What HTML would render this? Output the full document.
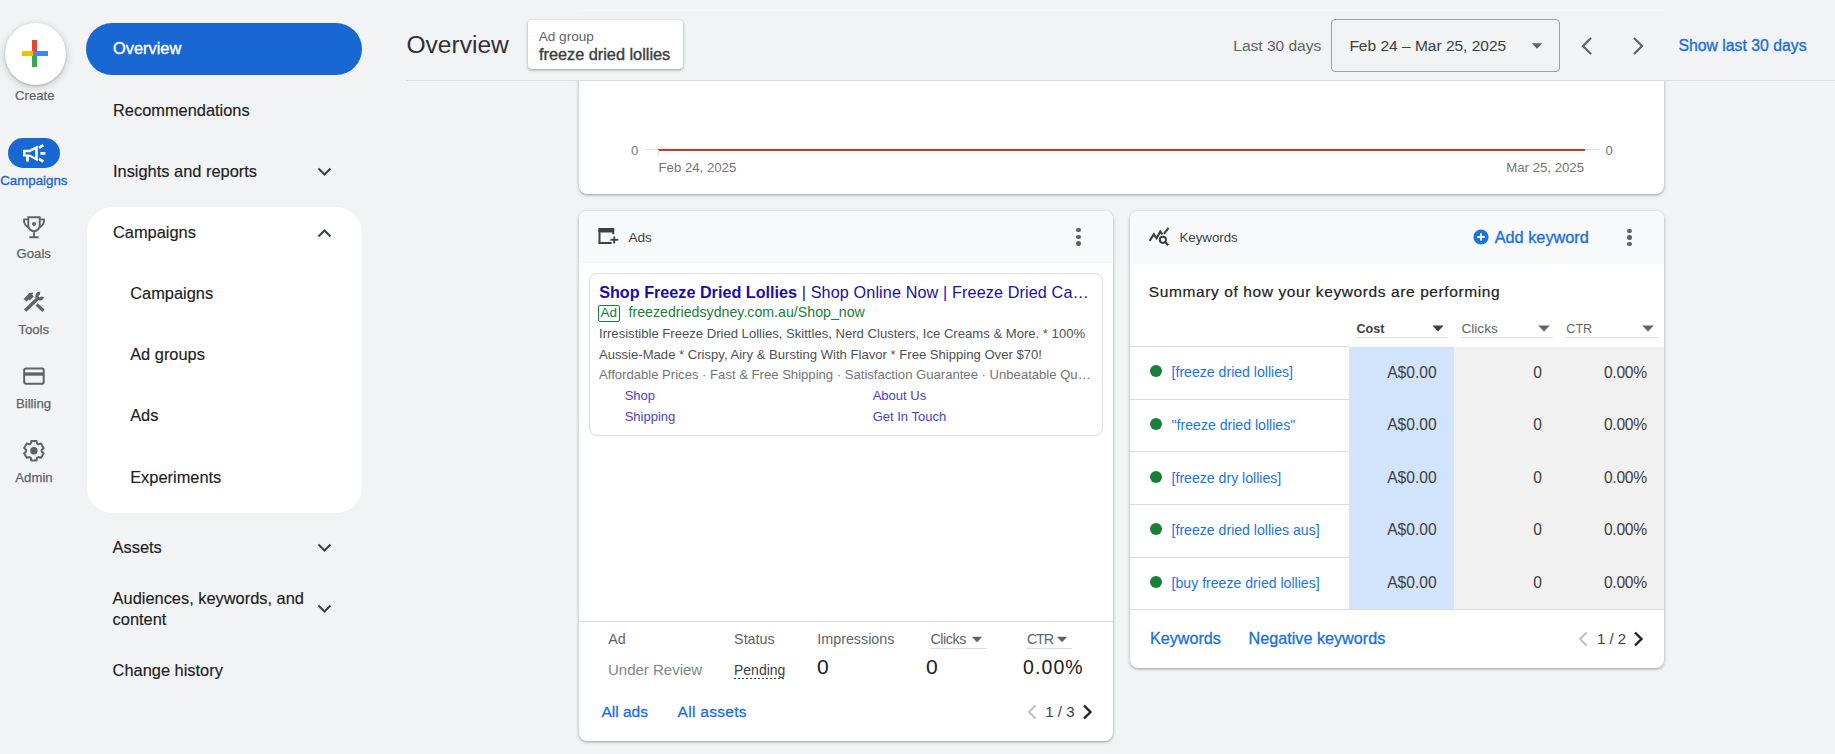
<!DOCTYPE html>
<html><head><meta charset="utf-8"><title>Overview</title>
<style>
html,body{margin:0;padding:0;width:1835px;height:754px;overflow:hidden;background:#f1f3f4;font-family:"Liberation Sans",sans-serif;position:relative}
.t{position:absolute;line-height:1;white-space:nowrap}
.r{position:absolute;display:block}
b{font-weight:700}
</style></head><body>
<div class="r" style="left:4.6px;top:23.3px;width:61.5px;height:61.5px;background:#fff;border-radius:50%;box-shadow:0 1px 2px rgba(60,64,67,.3),0 2px 6px 2px rgba(60,64,67,.15)"></div>
<div class="r" style="left:32.4px;top:40.4px;width:4.4px;height:13.2px;background:#ea4335"></div>
<div class="r" style="left:32.4px;top:53.6px;width:4.4px;height:13.0px;background:#34a853"></div>
<div class="r" style="left:21.5px;top:51.3px;width:11.4px;height:4.4px;background:#fbbc04"></div>
<div class="r" style="left:32.9px;top:51.3px;width:14.9px;height:4.4px;background:#4285f4"></div>
<div class="t" style="left:-65.2px;width:200px;text-align:center;top:89.2px;font-size:13.2px;color:#5f6368;font-weight:400;;-webkit-text-stroke:0.2px #5f6368">Create</div>
<div class="r" style="left:8.0px;top:138.4px;width:52.0px;height:29.6px;background:#1967d2;border-radius:15px"></div>
<svg class="r" style="left:18px;top:140px" width="32" height="28" viewBox="0 0 32 28"><path fill-rule="evenodd" d="M5 9.8H11L19.8 5.4V21.3L11 16.4H10.9V21.6H8V16.4H5Z M7.5 12.3H11.7L17.2 9.5V17.3L11.7 14.4H7.5Z" fill="#fff"/><path d="M21 7.9L25.3 5.1M22.4 13.4H27.4M21 18.9L25.3 21.7" stroke="#fff" stroke-width="2.8" stroke-linecap="butt"/></svg>
<div class="t" style="left:-66.2px;width:200px;text-align:center;top:173.5px;font-size:13.3px;color:#1967d2;font-weight:400;;-webkit-text-stroke:0.35px #1967d2">Campaigns</div>
<svg class="r" style="left:20px;top:212px" width="28" height="28" viewBox="0 0 28 28"><path d="M8.3 5.2H19.7V13.5A5.7 5.7 0 0 1 8.3 13.5Z M8.3 7.4H4.1V9.2Q4.1 12.8 8.7 15.6 M19.7 7.4H23.9V9.2Q23.9 12.8 19.3 15.6 M14 19.3V25.2 M9.3 25.3H18.6" fill="none" stroke="#5f6368" stroke-width="1.9"/><circle cx="14" cy="11.9" r="2" fill="#5f6368"/></svg>
<div class="t" style="left:-66.3px;width:200px;text-align:center;top:246.8px;font-size:13.2px;color:#5f6368;font-weight:400;;-webkit-text-stroke:0.25px #5f6368">Goals</div>
<svg class="r" style="left:20px;top:288px" width="28" height="28" viewBox="0 0 28 28"><path d="M5.2 22.4L17 11.2" stroke="#5f6368" stroke-width="3.4"/><path d="M20.05 5.4A2.75 2.75 0 1 0 22.4 8.7" fill="none" stroke="#5f6368" stroke-width="3.1"/><path d="M3.6 11L9.6 4.8H13.4L12.2 6.6L13.8 8.4L9.8 12.4L8.6 11.2L6.6 13.6Z" fill="#5f6368"/><path d="M16.6 16.4L23.4 22.8" stroke="#5f6368" stroke-width="3.3"/></svg>
<div class="t" style="left:-66.3px;width:200px;text-align:center;top:323.1px;font-size:13.2px;color:#5f6368;font-weight:400;;-webkit-text-stroke:0.25px #5f6368">Tools</div>
<svg class="r" style="left:20px;top:362px" width="28" height="28" viewBox="0 0 28 28"><rect x="4.2" y="6.4" width="19.5" height="15.3" rx="1.6" fill="none" stroke="#5f6368" stroke-width="2"/><rect x="4" y="10.4" width="20" height="3.3" fill="#5f6368"/></svg>
<div class="t" style="left:-66.5px;width:200px;text-align:center;top:396.8px;font-size:13.2px;color:#5f6368;font-weight:400;;-webkit-text-stroke:0.25px #5f6368">Billing</div>
<svg class="r" style="left:20px;top:436px" width="28" height="28" viewBox="0 0 28 28"><path d="M10.73 7.57 L11.29 4.94 L16.51 4.94 L17.07 7.57 L18.48 8.39 L21.04 7.56 L23.66 12.09 L21.66 13.88 L21.66 15.52 L23.66 17.31 L21.04 21.84 L18.48 21.01 L17.07 21.83 L16.51 24.46 L11.29 24.46 L10.73 21.83 L9.32 21.01 L6.76 21.84 L4.14 17.31 L6.14 15.52 L6.14 13.88 L4.14 12.09 L6.76 7.56 L9.32 8.39Z" fill="none" stroke="#5f6368" stroke-width="2" stroke-linejoin="round"/><circle cx="13.9" cy="14.7" r="3.7" fill="#5f6368"/></svg>
<div class="t" style="left:-66.0px;width:200px;text-align:center;top:470.8px;font-size:13.2px;color:#5f6368;font-weight:400;;-webkit-text-stroke:0.25px #5f6368">Admin</div>
<div class="r" style="left:86.3px;top:23.3px;width:275.4px;height:52.0px;background:#1967d2;border-radius:26px"></div>
<div class="t" style="left:113.0px;top:40.3px;font-size:16.4px;color:#fff;font-weight:400;;-webkit-text-stroke:0.35px #fff">Overview</div>
<div class="t" style="left:113.0px;top:101.8px;font-size:16.4px;color:#202124;font-weight:400;;-webkit-text-stroke:0.15px #202124">Recommendations</div>
<div class="t" style="left:113.0px;top:163.2px;font-size:16.4px;color:#202124;font-weight:400;;-webkit-text-stroke:0.15px #202124">Insights and reports</div>
<svg class="r" style="left:317.2px;top:166.8px" width="15" height="9" viewBox="0 0 15 9"><path d="M1.5 1.5L7.5 7.5L13.5 1.5" fill="none" stroke="#3c4043" stroke-width="2"/></svg>
<div class="r" style="left:86.5px;top:207.0px;width:275.0px;height:306.4px;background:#fff;border-radius:26px"></div>
<div class="t" style="left:113.0px;top:223.9px;font-size:16.4px;color:#202124;font-weight:400;;-webkit-text-stroke:0.15px #202124">Campaigns</div>
<svg class="r" style="left:317.2px;top:229.3px" width="15" height="9" viewBox="0 0 15 9"><path d="M1.5 7.5L7.5 1.5L13.5 7.5" fill="none" stroke="#3c4043" stroke-width="2"/></svg>
<div class="t" style="left:130.2px;top:285.0px;font-size:16.4px;color:#202124;font-weight:400;;-webkit-text-stroke:0.15px #202124">Campaigns</div>
<div class="t" style="left:130.2px;top:346.0px;font-size:16.4px;color:#202124;font-weight:400;;-webkit-text-stroke:0.15px #202124">Ad groups</div>
<div class="t" style="left:130.2px;top:407.3px;font-size:16.4px;color:#202124;font-weight:400;;-webkit-text-stroke:0.15px #202124">Ads</div>
<div class="t" style="left:130.2px;top:468.7px;font-size:16.4px;color:#202124;font-weight:400;;-webkit-text-stroke:0.15px #202124">Experiments</div>
<div class="t" style="left:112.6px;top:538.7px;font-size:16.4px;color:#202124;font-weight:400;;-webkit-text-stroke:0.15px #202124">Assets</div>
<svg class="r" style="left:317.2px;top:542.9px" width="15" height="9" viewBox="0 0 15 9"><path d="M1.5 1.5L7.5 7.5L13.5 1.5" fill="none" stroke="#3c4043" stroke-width="2"/></svg>
<div class="t" style="left:112.6px;top:589.6px;font-size:16.4px;color:#202124;font-weight:400;;-webkit-text-stroke:0.15px #202124">Audiences, keywords, and</div>
<div class="t" style="left:112.6px;top:611.4px;font-size:16.4px;color:#202124;font-weight:400;;-webkit-text-stroke:0.15px #202124">content</div>
<svg class="r" style="left:317.2px;top:604.1px" width="15" height="9" viewBox="0 0 15 9"><path d="M1.5 1.5L7.5 7.5L13.5 1.5" fill="none" stroke="#3c4043" stroke-width="2"/></svg>
<div class="t" style="left:112.6px;top:661.9px;font-size:16.4px;color:#202124;font-weight:400;;-webkit-text-stroke:0.15px #202124">Change history</div>
<div class="r" style="left:578.7px;top:-20.0px;width:1085.0px;height:213.8px;background:#fff;border-radius:8px;box-shadow:0 1px 2px 0 rgba(60,64,67,.3),0 1px 3px 1px rgba(60,64,67,.15);"></div>
<div class="t" style="left:631.0px;top:143.6px;font-size:13.2px;color:#757575;font-weight:400;">0</div>
<div class="r" style="left:644.6px;top:149.0px;width:13.4px;height:1.0px;background:#e0e0e0"></div>
<div class="r" style="left:658.0px;top:149.0px;width:927.0px;height:2.2px;background:#d93025"></div>
<div class="r" style="left:657.5px;top:150.0px;width:1.0px;height:6.0px;background:#e0e0e0"></div>
<div class="r" style="left:1585.0px;top:149.0px;width:15.0px;height:1.0px;background:#e0e0e0"></div>
<div class="t" style="left:1605.5px;top:143.6px;font-size:13.2px;color:#757575;font-weight:400;">0</div>
<div class="t" style="left:658.5px;top:161.3px;font-size:13.2px;color:#757575;font-weight:400;">Feb 24, 2025</div>
<div class="t" style="right:251.0px;top:161.3px;font-size:13.2px;color:#757575;font-weight:400;">Mar 25, 2025</div>
<div class="r" style="left:380.0px;top:0.0px;width:1455.0px;height:80.0px;background:#f1f3f4"></div>
<div class="r" style="left:578.0px;top:10.0px;width:1086.0px;height:1.0px;background:#f6f7f8"></div>
<div class="r" style="left:406.0px;top:80.0px;width:1429.0px;height:1.0px;background:#dadce0"></div>
<div class="t" style="left:406.4px;top:33.1px;font-size:24.6px;color:#303134;font-weight:400;">Overview</div>
<div class="r" style="left:528.0px;top:20.3px;width:155.0px;height:49.0px;background:#fff;border-radius:4px;box-shadow:0 1px 2px 0 rgba(60,64,67,.3),0 1px 3px 1px rgba(60,64,67,.15);"></div>
<div class="t" style="left:538.7px;top:29.9px;font-size:13.6px;color:#5f6368;font-weight:400;">Ad group</div>
<div class="t" style="left:539.0px;top:45.7px;font-size:16.3px;color:#3c4043;font-weight:400;;-webkit-text-stroke:0.4px #3c4043">freeze dried lollies</div>
<div class="t" style="left:1233.3px;top:38.3px;font-size:15.5px;color:#5f6368;font-weight:400;">Last 30 days</div>
<div class="r" style="left:1331.0px;top:19.2px;width:229.0px;height:52.6px;border:1px solid #9aa0a6;border-radius:4px;box-sizing:border-box"></div>
<div class="t" style="left:1349.4px;top:38.3px;font-size:15.5px;color:#3c4043;font-weight:400;">Feb 24 &#8211; Mar 25, 2025</div>
<svg class="r" style="left:1531px;top:43px" width="12" height="6" viewBox="0 0 12 6"><path d="M0.8 0.3h10.5L6 5.8z" fill="#5f6368"/></svg>
<svg class="r" style="left:1578px;top:36px" width="16" height="20" viewBox="0 0 16 20"><path d="M13 2L5 10l8 8" fill="none" stroke="#5f6368" stroke-width="2.2"/></svg>
<svg class="r" style="left:1631px;top:36px" width="16" height="20" viewBox="0 0 16 20"><path d="M3 2l8 8-8 8" fill="none" stroke="#5f6368" stroke-width="2.2"/></svg>
<div class="t" style="left:1678.4px;top:38.1px;font-size:15.8px;color:#1a6fde;font-weight:400;;-webkit-text-stroke:0.35px #1a6fde">Show last 30 days</div>
<div class="r" style="left:578.7px;top:210.9px;width:534.3px;height:530.1px;background:#fff;border-radius:8px;overflow:hidden;box-shadow:0 1px 2px 0 rgba(60,64,67,.3),0 1px 3px 1px rgba(60,64,67,.15);"></div>
<div class="r" style="left:578.7px;top:210.9px;width:534.3px;height:52.6px;background:#f8f9fa;border-radius:8px 8px 0 0"></div>
<svg class="r" style="left:594px;top:222px" width="30" height="28" viewBox="0 0 30 28"><g fill="#3c4043"><rect x="4.5" y="5.9" width="15.7" height="4.7" rx="1"/><rect x="4.5" y="5.9" width="2" height="16" rx="0.8"/><rect x="4.5" y="19.9" width="13.1" height="2" rx="0.5"/><rect x="18.2" y="5.9" width="2" height="6.4" rx="0.5"/><rect x="16.3" y="16.9" width="8" height="1.8"/><rect x="19.3" y="14.5" width="1.8" height="7"/></g></svg>
<div class="t" style="left:628.4px;top:230.7px;font-size:13.6px;color:#3c4043;font-weight:400;">Ads</div>
<div class="r" style="left:1076.2px;top:228.0px;width:4.4px;height:4.4px;background:#5f6368;border-radius:50%"></div>
<div class="r" style="left:1076.2px;top:234.7px;width:4.4px;height:4.4px;background:#5f6368;border-radius:50%"></div>
<div class="r" style="left:1076.2px;top:241.2px;width:4.4px;height:4.4px;background:#5f6368;border-radius:50%"></div>
<div class="r" style="left:588.6px;top:272.7px;width:514.6px;height:163.5px;border:1px solid #dadce0;border-radius:8px;box-sizing:border-box"></div>
<div class="t" style="left:599.2px;top:284.0px;font-size:16.2px;color:#1a0dab;font-weight:400;"><b>Shop Freeze Dried Lollies</b><span style="letter-spacing:0.12px"> | Shop Online Now | Freeze Dried Ca&#8230;</span></div>
<div class="r" style="left:597.8px;top:305.0px;width:21.9px;height:16.5px;border:1px solid #188038;border-radius:2px;box-sizing:border-box"></div>
<div class="t" style="left:600.5px;top:306.1px;font-size:13.5px;color:#188038;font-weight:400;">Ad</div>
<div class="t" style="left:628.5px;top:304.8px;font-size:14.2px;color:#188038;font-weight:400;">freezedriedsydney.com.au/Shop_now</div>
<div class="t" style="left:599.0px;top:326.7px;font-size:13.1px;color:#4d5156;font-weight:400;">Irresistible Freeze Dried Lollies, Skittles, Nerd Clusters, Ice Creams &amp; More. * 100%</div>
<div class="t" style="left:599.0px;top:347.6px;font-size:13.1px;color:#4d5156;font-weight:400;">Aussie-Made * Crispy, Airy &amp; Bursting With Flavor * Free Shipping Over $70!</div>
<div class="t" style="left:599.0px;top:368.1px;font-size:13.1px;color:#70757a;font-weight:400;">Affordable Prices &#183; Fast &amp; Free Shipping &#183; Satisfaction Guarantee &#183; Unbeatable Qu&#8230;</div>
<div class="t" style="left:624.7px;top:388.6px;font-size:13px;color:#4b3fc7;font-weight:400;">Shop</div>
<div class="t" style="left:624.7px;top:409.7px;font-size:13px;color:#4b3fc7;font-weight:400;">Shipping</div>
<div class="t" style="left:872.7px;top:388.6px;font-size:13px;color:#4b3fc7;font-weight:400;">About Us</div>
<div class="t" style="left:872.7px;top:409.7px;font-size:13px;color:#4b3fc7;font-weight:400;">Get In Touch</div>
<div class="r" style="left:578.7px;top:621.0px;width:534.3px;height:1.0px;background:#dadce0"></div>
<div class="t" style="left:608.2px;top:631.9px;font-size:14.3px;color:#5f6368;font-weight:400;">Ad</div>
<div class="t" style="left:734.1px;top:631.9px;font-size:14.3px;color:#5f6368;font-weight:400;">Status</div>
<div class="t" style="left:817.3px;top:631.9px;font-size:14.3px;color:#5f6368;font-weight:400;">Impressions</div>
<div class="t" style="left:930.4px;top:631.9px;font-size:14.3px;color:#5f6368;font-weight:400;letter-spacing:-0.4px">Clicks</div>
<svg class="r" style="left:971px;top:636px" width="12" height="7" viewBox="0 0 12 7"><path d="M0.8 0.8h10.4L6 6.3z" fill="#5f6368"/></svg>
<div class="r" style="left:930.0px;top:647.5px;width:56.2px;height:1.0px;background:#dadce0"></div>
<div class="t" style="left:1027.0px;top:631.9px;font-size:14.3px;color:#5f6368;font-weight:400;letter-spacing:-1.2px">CTR</div>
<svg class="r" style="left:1056px;top:636px" width="12" height="7" viewBox="0 0 12 7"><path d="M0.8 0.8h10.4L6 6.3z" fill="#5f6368"/></svg>
<div class="r" style="left:1027.0px;top:647.5px;width:44.8px;height:1.0px;background:#dadce0"></div>
<div class="t" style="left:608.0px;top:662.3px;font-size:15px;color:#80868b;font-weight:400;">Under Review</div>
<div class="t" style="left:734.0px;top:663.1px;font-size:14px;color:#3c4043;font-weight:400;">Pending</div>
<div class="r" style="left:734.0px;top:678.0px;width:52.0px;height:1.2px;background-image:linear-gradient(90deg,#3c4043 50%,transparent 50%);background-size:4px 1px"></div>
<div class="t" style="left:817.3px;top:657.5px;font-size:19.5px;color:#202124;font-weight:400;transform:scaleX(1.08);transform-origin:left">0</div>
<div class="t" style="left:926.3px;top:657.5px;font-size:19.5px;color:#202124;font-weight:400;transform:scaleX(1.08);transform-origin:left">0</div>
<div class="t" style="left:1023.0px;top:657.5px;font-size:19.5px;color:#202124;font-weight:400;letter-spacing:1.1px">0.00%</div>
<div class="t" style="left:601.4px;top:704.3px;font-size:15.5px;color:#1a6fde;font-weight:400;;-webkit-text-stroke:0.3px #1a6fde">All ads</div>
<div class="t" style="left:677.5px;top:704.3px;font-size:15.5px;color:#1a6fde;font-weight:400;letter-spacing:0.3px;-webkit-text-stroke:0.3px #1a6fde">All assets</div>
<svg class="r" style="left:1025px;top:704px" width="13" height="16" viewBox="0 0 13 16"><path d="M10.5 1.5L4 8l6.5 6.5" fill="none" stroke="#bdc1c6" stroke-width="2"/></svg>
<div class="t" style="left:1045.3px;top:704.2px;font-size:15px;color:#3c4043;font-weight:400;">1 / 3</div>
<svg class="r" style="left:1081px;top:704px" width="13" height="16" viewBox="0 0 13 16"><path d="M3 1.5L9.5 8 3 14.5" fill="none" stroke="#202124" stroke-width="2.4"/></svg>
<div class="r" style="left:1130.4px;top:210.7px;width:533.3px;height:456.9px;background:#fff;border-radius:8px;box-shadow:0 1px 2px 0 rgba(60,64,67,.3),0 1px 3px 1px rgba(60,64,67,.15);"></div>
<div class="r" style="left:1130.4px;top:210.7px;width:533.3px;height:52.9px;background:#f8f9fa;border-radius:8px 8px 0 0"></div>
<svg class="r" style="left:1144px;top:222px" width="30" height="28" viewBox="0 0 30 28"><path d="M5.6 19L9.8 12.1L12.6 16.3L16.3 9.5L18.4 12.3 M20 11.9L24.5 5.9" fill="none" stroke="#3c4043" stroke-width="2.1"/><circle cx="18.9" cy="17.8" r="3.1" fill="none" stroke="#3c4043" stroke-width="2"/><path d="M21.1 20L24.4 23.2" stroke="#3c4043" stroke-width="2.2"/></svg>
<div class="t" style="left:1179.4px;top:230.6px;font-size:13.3px;color:#3c4043;font-weight:400;">Keywords</div>
<svg class="r" style="left:1473px;top:229px" width="16" height="16" viewBox="0 0 16 16"><circle cx="8" cy="8" r="7.6" fill="#1a73e8"/><path d="M8 4.2v7.6M4.2 8h7.6" stroke="#fff" stroke-width="1.8"/></svg>
<div class="t" style="left:1494.7px;top:229.4px;font-size:16.3px;color:#1a6fde;font-weight:400;;-webkit-text-stroke:0.35px #1a6fde">Add keyword</div>
<div class="r" style="left:1627.4px;top:228.8px;width:4.4px;height:4.4px;background:#5f6368;border-radius:50%"></div>
<div class="r" style="left:1627.4px;top:235.3px;width:4.4px;height:4.4px;background:#5f6368;border-radius:50%"></div>
<div class="r" style="left:1627.4px;top:241.8px;width:4.4px;height:4.4px;background:#5f6368;border-radius:50%"></div>
<div class="t" style="left:1148.8px;top:283.8px;font-size:15.5px;color:#202124;font-weight:400;letter-spacing:0.6px;-webkit-text-stroke:0.2px #202124">Summary of how your keywords are performing</div>
<div class="t" style="left:1356.5px;top:322.6px;font-size:12.6px;color:#3c4043;font-weight:700;">Cost</div>
<svg class="r" style="left:1431px;top:325px" width="14" height="8" viewBox="0 0 14 8"><path d="M1.3 0.6h11.4L7 6.6z" fill="#3c4043"/></svg>
<div class="r" style="left:1356.0px;top:336.8px;width:92.0px;height:1.0px;background:#dadce0"></div>
<div class="t" style="left:1461.4px;top:321.7px;font-size:13.7px;color:#5f6368;font-weight:400;">Clicks</div>
<svg class="r" style="left:1536.5px;top:325px" width="14" height="8" viewBox="0 0 14 8"><path d="M1.3 0.6h11.4L7 6.6z" fill="#5f6368"/></svg>
<div class="r" style="left:1461.0px;top:336.8px;width:92.0px;height:1.0px;background:#dadce0"></div>
<div class="t" style="left:1566.3px;top:322.6px;font-size:12.6px;color:#5f6368;font-weight:400;">CTR</div>
<svg class="r" style="left:1641.3px;top:325px" width="14" height="8" viewBox="0 0 14 8"><path d="M1.3 0.6h11.4L7 6.6z" fill="#5f6368"/></svg>
<div class="r" style="left:1566.0px;top:336.8px;width:92.3px;height:1.0px;background:#dadce0"></div>
<div class="r" style="left:1349.4px;top:346.7px;width:104.4px;height:262.8px;background:#d2e3fc"></div>
<div class="r" style="left:1453.8px;top:346.7px;width:209.9px;height:262.8px;background:#f1f1f1"></div>
<div class="r" style="left:1130.4px;top:346.1px;width:219.0px;height:1.0px;background:#dadce0"></div>
<div class="r" style="left:1130.4px;top:398.7px;width:219.0px;height:1.0px;background:#dadce0"></div>
<div class="r" style="left:1130.4px;top:451.3px;width:219.0px;height:1.0px;background:#dadce0"></div>
<div class="r" style="left:1130.4px;top:503.9px;width:219.0px;height:1.0px;background:#dadce0"></div>
<div class="r" style="left:1130.4px;top:556.5px;width:219.0px;height:1.0px;background:#dadce0"></div>
<div class="r" style="left:1130.4px;top:609.0px;width:219.0px;height:1.0px;background:#dadce0"></div>
<div class="r" style="left:1130.4px;top:609.0px;width:533.3px;height:1.0px;background:#dadce0"></div>
<div class="r" style="left:1149.6px;top:365.3px;width:12.0px;height:12.0px;background:#188038;border-radius:50%"></div>
<div class="t" style="left:1171.6px;top:365.3px;font-size:14.1px;color:#1a73e8;font-weight:400;">[freeze dried lollies]</div>
<div class="t" style="right:398.4px;top:364.6px;font-size:15.6px;color:#3c4043;font-weight:400;">A$0.00</div>
<div class="t" style="right:293.2px;top:364.6px;font-size:15.6px;color:#3c4043;font-weight:400;">0</div>
<div class="t" style="right:188.3px;top:364.6px;font-size:15.6px;color:#3c4043;font-weight:400;letter-spacing:-0.3px">0.00%</div>
<div class="r" style="left:1149.6px;top:417.9px;width:12.0px;height:12.0px;background:#188038;border-radius:50%"></div>
<div class="t" style="left:1171.6px;top:417.9px;font-size:14.1px;color:#1a73e8;font-weight:400;">"freeze dried lollies"</div>
<div class="t" style="right:398.4px;top:417.2px;font-size:15.6px;color:#3c4043;font-weight:400;">A$0.00</div>
<div class="t" style="right:293.2px;top:417.2px;font-size:15.6px;color:#3c4043;font-weight:400;">0</div>
<div class="t" style="right:188.3px;top:417.2px;font-size:15.6px;color:#3c4043;font-weight:400;letter-spacing:-0.3px">0.00%</div>
<div class="r" style="left:1149.6px;top:470.5px;width:12.0px;height:12.0px;background:#188038;border-radius:50%"></div>
<div class="t" style="left:1171.6px;top:470.5px;font-size:14.1px;color:#1a73e8;font-weight:400;">[freeze dry lollies]</div>
<div class="t" style="right:398.4px;top:469.8px;font-size:15.6px;color:#3c4043;font-weight:400;">A$0.00</div>
<div class="t" style="right:293.2px;top:469.8px;font-size:15.6px;color:#3c4043;font-weight:400;">0</div>
<div class="t" style="right:188.3px;top:469.8px;font-size:15.6px;color:#3c4043;font-weight:400;letter-spacing:-0.3px">0.00%</div>
<div class="r" style="left:1149.6px;top:523.1px;width:12.0px;height:12.0px;background:#188038;border-radius:50%"></div>
<div class="t" style="left:1171.6px;top:523.1px;font-size:14.1px;color:#1a73e8;font-weight:400;">[freeze dried lollies aus]</div>
<div class="t" style="right:398.4px;top:522.4px;font-size:15.6px;color:#3c4043;font-weight:400;">A$0.00</div>
<div class="t" style="right:293.2px;top:522.4px;font-size:15.6px;color:#3c4043;font-weight:400;">0</div>
<div class="t" style="right:188.3px;top:522.4px;font-size:15.6px;color:#3c4043;font-weight:400;letter-spacing:-0.3px">0.00%</div>
<div class="r" style="left:1149.6px;top:575.7px;width:12.0px;height:12.0px;background:#188038;border-radius:50%"></div>
<div class="t" style="left:1171.6px;top:575.7px;font-size:14.1px;color:#1a73e8;font-weight:400;">[buy freeze dried lollies]</div>
<div class="t" style="right:398.4px;top:575.0px;font-size:15.6px;color:#3c4043;font-weight:400;">A$0.00</div>
<div class="t" style="right:293.2px;top:575.0px;font-size:15.6px;color:#3c4043;font-weight:400;">0</div>
<div class="t" style="right:188.3px;top:575.0px;font-size:15.6px;color:#3c4043;font-weight:400;letter-spacing:-0.3px">0.00%</div>
<div class="t" style="left:1149.9px;top:629.7px;font-size:16.2px;color:#1a6fde;font-weight:400;;-webkit-text-stroke:0.3px #1a6fde">Keywords</div>
<div class="t" style="left:1248.5px;top:629.7px;font-size:16.2px;color:#1a6fde;font-weight:400;;-webkit-text-stroke:0.3px #1a6fde">Negative keywords</div>
<svg class="r" style="left:1576px;top:631px" width="13" height="16" viewBox="0 0 13 16"><path d="M10.5 1.5L4 8l6.5 6.5" fill="none" stroke="#bdc1c6" stroke-width="2"/></svg>
<div class="t" style="left:1597.0px;top:630.6px;font-size:15px;color:#3c4043;font-weight:400;">1 / 2</div>
<svg class="r" style="left:1631.5px;top:631px" width="13" height="16" viewBox="0 0 13 16"><path d="M3 1.5L9.5 8 3 14.5" fill="none" stroke="#202124" stroke-width="2.4"/></svg>
</body></html>
